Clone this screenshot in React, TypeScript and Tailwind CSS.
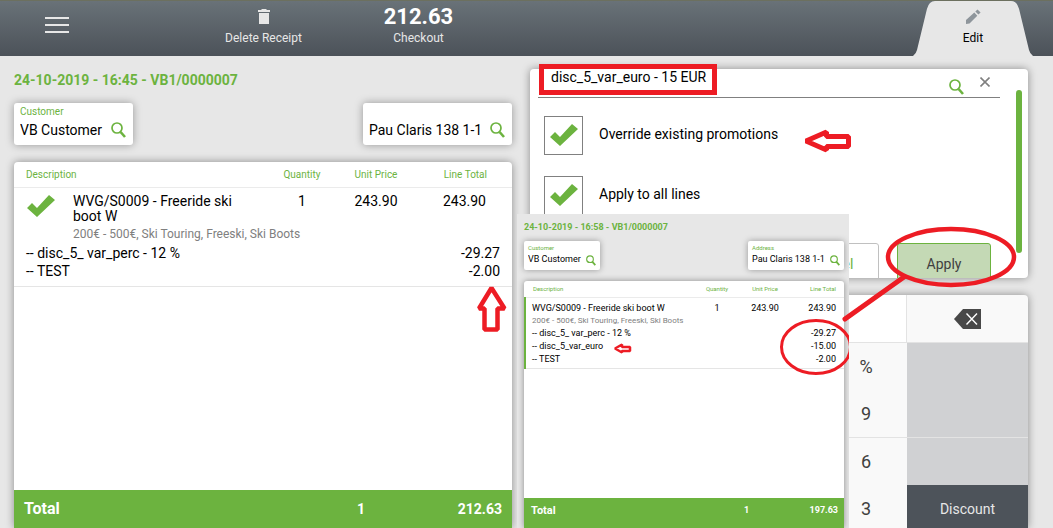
import type { ReactNode } from "react";

const CHECK = "M1 14L6 9L11 14L23 1L29 6L11 23Z";

function SearchIcon({ className }: { className: string }) {
  return (
    <svg viewBox="0 0 15 16" className={className} fill="none" stroke="#6cb33f" aria-hidden="true">
      <circle cx="6" cy="6" r="5" strokeWidth="1.7" />
      <path d="M9.6 10L14 15" strokeWidth="2.6" />
    </svg>
  );
}

function CheckIcon({ className }: { className: string }) {
  return (
    <svg viewBox="0 0 30 24" className={className} aria-hidden="true">
      <path d={CHECK} fill="#6cb33f" />
    </svg>
  );
}

function Field({ id, label, value, className }: { id: string; label?: string; value: string; className: string }) {
  return (
    <div className={`flex h-[42px] flex-col rounded-[3px] bg-white pl-1.5 pr-[7px] shadow-[0_0_8px_rgba(0,0,0,0.35)] ${className}`}>
      <label htmlFor={id} className="h-[18px] pt-[3px] text-[10px] leading-3 text-[#6cb33f]">
        {label}
      </label>
      <div className="flex items-center">
        <input id={id} defaultValue={value} aria-label={label ?? "Address"} className="h-[18px] w-full min-w-0 bg-transparent text-sm outline-none" />
        <button type="button" aria-label="Search">
          <SearchIcon className="h-4 w-[15px]" />
        </button>
      </div>
    </div>
  );
}

function SmallField({ id, label, value, className }: { id: string; label: string; value: string; className: string }) {
  return (
    <div className={`flex h-[29px] flex-col rounded-[2px] bg-white px-1 shadow-[0_0_6px_rgba(0,0,0,0.35)] ${className}`}>
      <label htmlFor={id} className="h-[13px] pt-[3px] text-[6px] leading-[8px] text-[#6cb33f]">
        {label}
      </label>
      <div className="flex items-center">
        <input id={id} defaultValue={value} className="h-3 w-full min-w-0 bg-transparent text-[9px] outline-none" />
        <button type="button" aria-label="Search">
          <SearchIcon className="h-[11px] w-[10px]" />
        </button>
      </div>
    </div>
  );
}

function Receipt() {
  return (
    <section className="flex min-w-0 flex-col">
      <h1 className="mt-3.5 text-sm font-bold leading-5 text-[#6cb33f]">24-10-2019 - 16:45 - VB1/0000007</h1>
      <div className="mt-[13px] flex justify-between">
        <Field id="customer" label="Customer" value="VB Customer" className="w-[119px]" />
        <Field id="address" value="Pau Claris 138 1-1" className="w-[149px]" />
      </div>
      <div className="mt-[17px] flex min-h-0 flex-1 flex-col justify-between overflow-hidden rounded-t-[4px] bg-white shadow-[0_0_8px_rgba(0,0,0,0.4)]">
        <table className="w-full table-fixed border-collapse">
          <colgroup>
            <col className="w-[59px]" />
            <col />
            <col className="w-[74px]" />
            <col className="w-[74px]" />
            <col className="w-[99px]" />
          </colgroup>
          <thead>
            <tr className="h-[25px] border-b border-[#ebebeb] text-[10px] text-[#6cb33f]">
              <th colSpan={2} className="pl-3 text-left font-normal">Description</th>
              <th className="font-normal">Quantity</th>
              <th className="font-normal">Unit Price</th>
              <th className="pr-[25px] text-right font-normal">Line Total</th>
            </tr>
          </thead>
          <tbody className="border-b border-[#e5e5e5]">
            <tr className="align-top text-sm leading-[15px]">
              <td className="pl-3 pt-1.5">
                <CheckIcon className="h-6 w-[30px]" />
              </td>
              <td className="pr-6 pt-1.5">WVG/S0009 - Freeride ski boot W</td>
              <td className="pt-1.5 text-center">1</td>
              <td className="pt-1.5 text-center">243.90</td>
              <td className="pr-[26px] pt-1.5 text-right">243.90</td>
            </tr>
            <tr className="text-xs text-[#808080]">
              <td />
              <td colSpan={4} className="pb-0.5 pt-0.5">200€ - 500€, Ski Touring, Freeski, Ski Boots</td>
            </tr>
            <tr className="text-sm leading-[18px]">
              <td colSpan={3} className="pl-3">-- disc_5_ var_perc - 12 %</td>
              <td colSpan={2} className="pr-3 text-right">-29.27</td>
            </tr>
            <tr className="text-sm leading-[18px]">
              <td colSpan={3} className="pb-1.5 pl-3">-- TEST</td>
              <td colSpan={2} className="pb-1.5 pr-3 text-right">-2.00</td>
            </tr>
          </tbody>
        </table>
        <div className="flex h-[38px] shrink-0 items-center bg-[#6cb33f] px-2.5 text-sm font-bold text-white">
          <span className="flex-1 text-base">Total</span>
          <span className="w-[70px]">1</span>
          <span className="w-[75px] text-right">212.63</span>
        </div>
      </div>
    </section>
  );
}

const smallLines = [
  ["-- disc_5_ var_perc - 12 %", "-29.27"],
  ["-- disc_5_var_euro", "-15.00"],
  ["-- TEST", "-2.00"],
];

// receipt as it looks after the discount is applied
function ResultReceipt() {
  return (
    <section className="absolute -left-[13px] bottom-0 top-[158px] flex w-[332px] flex-col overflow-hidden bg-[#e7e7e7] pl-[7px] pr-[5px]">
      <h2 className="mt-[7px] text-[9px] font-bold leading-3 text-[#6cb33f]">24-10-2019 - 16:58 - VB1/0000007</h2>
      <div className="mt-2 flex justify-between">
        <SmallField id="customer-after" label="Customer" value="VB Customer" className="w-[76px]" />
        <SmallField id="address-after" label="Address" value="Pau Claris 138 1-1" className="w-24" />
      </div>
      <div className="mt-[11px] flex min-h-0 flex-1 flex-col justify-between overflow-hidden rounded-t-[3px] bg-white shadow-[0_0_6px_rgba(0,0,0,0.4)]">
        <table className="w-full table-fixed border-collapse">
          <colgroup>
            <col />
            <col className="w-12" />
            <col className="w-12" />
            <col className="w-[55px]" />
          </colgroup>
          <thead>
            <tr className="h-4 border-b border-[#ebebeb] text-[6px] text-[#6cb33f]">
              <th className="pl-2 text-left font-normal">Description</th>
              <th className="font-normal">Quantity</th>
              <th className="font-normal">Unit Price</th>
              <th className="pr-2 text-right font-normal">Line Total</th>
            </tr>
          </thead>
          <tbody className="border-b border-l-2 border-b-[#e5e5e5] border-l-[#6cb33f] text-[9px] leading-[13px]">
            <tr>
              <td className="pl-1.5 pt-1">WVG/S0009 - Freeride ski boot W</td>
              <td className="pt-1 text-center">1</td>
              <td className="pt-1 text-center">243.90</td>
              <td className="pr-2 pt-1 text-right">243.90</td>
            </tr>
            <tr className="text-[8px] leading-3 text-[#808080]">
              <td colSpan={4} className="pl-1.5">200€ - 500€, Ski Touring, Freeski, Ski Boots</td>
            </tr>
            {smallLines.map(([name, amount]) => (
              <tr key={name} className="last:h-4 last:align-top">
                <td colSpan={3} className="pl-1.5">{name}</td>
                <td className="pr-2 text-right">{amount}</td>
              </tr>
            ))}
          </tbody>
        </table>
        <div className="flex h-[30px] shrink-0 items-center bg-[#6cb33f] pb-1 pl-[7px] pr-1.5 text-[9px] font-bold text-white">
          <span className="flex-1 text-[11px]">Total</span>
          <span className="w-[45px]">1</span>
          <span className="w-[49px] text-right">197.63</span>
        </div>
      </div>
    </section>
  );
}

function Option({ id, children }: { id: string; children: ReactNode }) {
  return (
    <div className="flex items-center">
      <span className="relative flex">
        <input id={id} type="checkbox" defaultChecked className="peer size-[39px] appearance-none border border-[#808080]" />
        <CheckIcon className="pointer-events-none absolute left-[5px] top-[7px] hidden h-6 w-[30px] peer-checked:block" />
      </span>
      <label htmlFor={id} className="pb-[3px] pl-4 text-sm">
        {children}
      </label>
    </div>
  );
}

function Promotion() {
  return (
    <form className="relative mt-[13px] h-[209px] shrink-0 overflow-hidden rounded-[4px] bg-white shadow-[0_0_8px_rgba(0,0,0,0.4)]">
      <div className="ml-2 mr-7 flex h-[29px] border-b border-[#808080] pr-2.5">
        <input aria-label="Promotion" defaultValue="disc_5_var_euro - 15 EUR" className="h-4 min-w-0 flex-1 bg-transparent pl-[13px] text-sm outline-none" />
        <button type="button" aria-label="Search" className="mr-4 pt-2">
          <SearchIcon className="h-4 w-[15px]" />
        </button>
        <button type="button" aria-label="Close" className="flex pt-2">
          <svg viewBox="0 0 10 10" className="size-2.5" stroke="#808080" strokeWidth="1.6">
            <path d="M0.5 0.5L9.5 9.5M9.5 0.5L0.5 9.5" />
          </svg>
        </button>
      </div>
      <div className="mt-[18px] flex flex-col gap-[21px] pl-3.5">
        <Option id="override">Override existing promotions</Option>
        <Option id="all-lines">Apply to all lines</Option>
      </div>
      <div className="mt-7 flex justify-end gap-[18px] pr-[37px] text-sm">
        <button type="button" className="h-[42px] w-[94px] rounded-[3px] border border-[#c0c0c0] text-[#6cb33f]">Cancel</button>
        <button type="button" className="h-[42px] w-[94px] rounded-[3px] border border-[#6cb33f] bg-[#c4d9b5] text-[#404040]">Apply</button>
      </div>
      <div className="absolute right-1.5 top-[21px] h-[163px] w-1.5 rounded-full bg-[#6cb33f]" />
    </form>
  );
}

function Key({ children }: { children: ReactNode }) {
  return (
    <button type="button" className="h-[47px] w-full pr-px text-lg text-[#404040]">
      {children}
    </button>
  );
}

function Keypad() {
  return (
    <div className="mt-[17px] flex min-h-0 flex-1 flex-col overflow-hidden rounded-t-[4px] bg-[#f9f9f9] shadow-[0_0_8px_rgba(0,0,0,0.4)]">
      <div className="flex h-12 shrink-0 border-b border-[#e3e3e3]">
        <div className="flex-1 border-r border-[#e3e3e3] bg-white" />
        <button type="button" aria-label="Backspace" className="flex w-[121px] items-center justify-center">
          <svg viewBox="0 0 27 20" className="h-5 w-[27px]" fill="none">
            <path d="M0 10L9 0H27V20H9Z" fill="#484848" />
            <path d="M12.5 4.5L23 15.5M23 4.5L12.5 15.5" stroke="#fff" strokeWidth="1.4" />
          </svg>
        </button>
      </div>
      <div className="flex shrink-0 justify-end border-b border-[#e3e3e3]">
        <div className="w-[81px]">
          <Key>%</Key>
          <Key>9</Key>
        </div>
        <div className="w-[121px] bg-[#d0d1d3]" />
      </div>
      <div className="flex shrink-0 justify-end">
        <div className="w-[81px]">
          <Key>6</Key>
          <Key>3</Key>
        </div>
        <div className="w-[121px] bg-[#d0d1d3] pt-[47px]">
          <button type="button" className="h-[47px] w-full bg-[#4d535a] text-sm text-[#e7e7e7]">Discount</button>
        </div>
      </div>
    </div>
  );
}

function Header() {
  return (
    <header className="flex h-14 shrink-0 border-t border-[#6c705f] bg-linear-to-b from-[#697278] to-[#4c5259] text-xs text-[#e7e7e7]">
      <button type="button" aria-label="Menu" className="mr-[72px] flex w-[114px] flex-col items-center gap-[5px] pt-4">
        <span className="h-0.5 w-6 bg-[#e7e7e7]" />
        <span className="h-0.5 w-6 bg-[#e7e7e7]" />
        <span className="h-0.5 w-6 bg-[#e7e7e7]" />
      </button>
      <button type="button" className="flex w-[155px] flex-col items-center pt-2">
        <svg viewBox="0 0 12 15" className="h-[15px] w-3" fill="#e7e7e7">
          <path d="M0 1H3L4 0H8L9 1H12V3H0ZM1 4H11V15H1Z" />
        </svg>
        <span className="mt-1.5 leading-4">Delete Receipt</span>
      </button>
      <button type="button" className="flex w-[155px] flex-col items-center pt-1">
        <span className="text-[22px] font-bold leading-6 text-white">212.63</span>
        <span className="mt-px leading-4">Checkout</span>
      </button>
      <button type="button" className="relative ml-auto mr-5 flex w-[120px] flex-col items-center pt-2 text-black">
        <svg viewBox="0 0 120 56" className="absolute inset-0 h-full w-full" preserveAspectRatio="none" fill="#e7e7e7">
          <path d="M0 56Q3 54 4 50L14 8Q16 0 22 0H98Q104 0 106 8L116 50Q117 54 120 56Z" />
        </svg>
        <svg viewBox="0 0 15 15" className="relative size-[15px]" fill="#8e959b">
          <path d="M0 11L8.300 3.500L11.300 6.700L3.500 14.500L0 15ZM9.300 2.500L11.500 0.400L14.600 3.500L12.400 5.600Z" />
        </svg>
        <span className="relative mt-1.5 leading-4">Edit</span>
      </button>
    </header>
  );
}

// hand drawn marks over the two receipts
function Marks() {
  return (
    <svg viewBox="0 0 1053 528" className="pointer-events-none absolute left-0 top-0 h-[528px] w-[1053px]" fill="none" stroke="#ed1c24" aria-hidden="true">
      <clipPath id="result">
        <path d="M517 214H849V528H517Z" />
      </clipPath>
      <path d="M541.500 66.500H714.500V92.500H541.500Z" strokeWidth="5" />
      <path d="M806 141L826.500 132V136.500H848.500V146.500H826.500V150Z" strokeWidth="5" strokeLinejoin="bevel" />
      <path d="M491.500 288L479 308.500H484.500V329.500H497.500V308.500H504.500Z" strokeWidth="4.500" strokeLinejoin="bevel" />
      <path d="M615 348.500L622 344.500V347H630V351H622V352.500Z" strokeWidth="2.500" strokeLinejoin="bevel" />
      <ellipse cx="816" cy="347" rx="34.500" ry="26.500" strokeWidth="3" clipPath="url(#result)" />
      <ellipse cx="951" cy="257" rx="63" ry="28" strokeWidth="4.500" />
      <path d="M845 319L904 277" strokeWidth="5" strokeLinecap="round" />
    </svg>
  );
}

export default function App() {
  return (
    <div className="relative flex h-screen min-h-[528px] flex-col overflow-hidden bg-[#e7e7e7] font-[Roboto,'Liberation_Sans',sans-serif] text-black">
      <Header />
      <main className="grid min-h-0 flex-1 grid-cols-2 grid-rows-[minmax(0,1fr)] gap-[18px] pl-3.5 pr-[25px]">
        <Receipt />
        <div className="relative flex min-w-0 flex-col">
          <Promotion />
          <Keypad />
          <ResultReceipt />
        </div>
      </main>
      <Marks />
    </div>
  );
}
